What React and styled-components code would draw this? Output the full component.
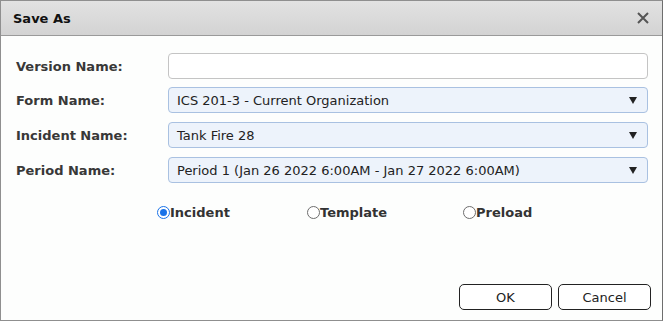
import React, { useState } from 'react'
import styled, { createGlobalStyle } from 'styled-components'

const GlobalStyle = createGlobalStyle`
  html, body {
    margin: 0;
    padding: 0;
    background: #ffffff;
  }
  body {
    font-family: 'DejaVu Sans', Verdana, sans-serif;
  }
`

const FIELDS = [
  { label: 'Version Name:', kind: 'input', value: '' },
  { label: 'Form Name:', kind: 'select', value: 'ICS 201-3 - Current Organization' },
  { label: 'Incident Name:', kind: 'select', value: 'Tank Fire 28' },
  { label: 'Period Name:', kind: 'select', value: 'Period 1 (Jan 26 2022 6:00AM - Jan 27 2022 6:00AM)' }
]

const TYPES = ['Incident', 'Template', 'Preload']

const Dialog = styled.div`
  width: 663px;
  height: 321px;
  box-sizing: border-box;
  border: 1px solid #8f8f8f;
  border-right-color: #6e6e6e;
  background: #fdfefd;
  display: flex;
  flex-direction: column;
`

const TitleBar = styled.div`
  height: 35px;
  box-sizing: border-box;
  display: flex;
  align-items: center;
  justify-content: space-between;
  padding: 0 12px 0 12px;
  background: linear-gradient(#e2e2e2, #d3d3d3);
  border-bottom: 1px solid #9a9a9a;
`

const Title = styled.div`
  font-size: 13px;
  font-weight: bold;
  color: #111;
`

const Close = styled.button`
  border: 0;
  background: none;
  padding: 0;
  width: 14px;
  height: 14px;
  display: flex;
  align-items: center;
  justify-content: center;
`

const Body = styled.div`
  flex: 1;
  padding: 17px 0 0 15px;
  display: flex;
  flex-direction: column;
`

const Row = styled.div`
  display: grid;
  grid-template-columns: 152px 1fr;
  align-items: center;
  height: 25px;
  margin: 0 14px ${p => (p.$first ? 9 : 10)}px 0;
`

const Label = styled.div`
  font-size: 13px;
  font-weight: bold;
  color: #383838;
`

const TextBox = styled.input`
  box-sizing: border-box;
  height: 26px;
  width: 100%;
  border: 1px solid #c4c4c4;
  border-radius: 4px;
  background: #fff;
  padding: 0 8px;
  font: 13px 'DejaVu Sans', Verdana, sans-serif;
`

const Select = styled.div`
  box-sizing: border-box;
  height: 26px;
  border: 1px solid #a9c1e1;
  border-radius: 4px;
  background: #edf3fb;
  display: flex;
  align-items: center;
  justify-content: space-between;
  padding: 0 10px 0 8px;
  font-size: 13px;
  color: #222;
`

const Caret = styled.span`
  width: 0;
  height: 0;
  border-left: 4px solid transparent;
  border-right: 4px solid transparent;
  border-top: 7px solid #222;
`

const Radios = styled.div`
  display: grid;
  grid-template-columns: 150px 156px auto;
  padding-left: 141px;
  margin-top: 13px;
`

const RadioLabel = styled.label`
  display: flex;
  align-items: center;
  font-size: 13px;
  font-weight: bold;
  color: #333;
`

const Dot = styled.span`
  box-sizing: border-box;
  width: 13px;
  height: 13px;
  border-radius: 50%;
  border: 1px solid ${p => (p.$on ? '#1a73e8' : '#6d6d6d')};
  background: #fff;
  display: flex;
  align-items: center;
  justify-content: center;
  &::after {
    content: '';
    width: 7px;
    height: 7px;
    border-radius: 50%;
    background: ${p => (p.$on ? '#1a73e8' : 'transparent')};
  }
`

const Footer = styled.div`
  margin-top: auto;
  display: flex;
  justify-content: flex-end;
  gap: 6px;
  padding: 0 11px 10px 0;
`

const Button = styled.button`
  box-sizing: border-box;
  width: 93px;
  height: 26px;
  border: 1px solid #222;
  border-radius: 5px;
  background: #fff;
  font: 13px 'DejaVu Sans', Verdana, sans-serif;
  color: #222;
`

export default function App () {
  const [type, setType] = useState('Incident')
  return (
    <>
      <GlobalStyle />
      <Dialog>
        <TitleBar>
          <Title>Save As</Title>
          <Close aria-label='close'>
            <svg width='12' height='12' viewBox='0 0 12 12'>
              <path d='M1 1 L11 11 M11 1 L1 11' stroke='#555' strokeWidth='2' />
            </svg>
          </Close>
        </TitleBar>
        <Body>
          {FIELDS.map((f, i) => (
            <Row key={f.label} $first={i === 0}>
              <Label>{f.label}</Label>
              {f.kind === 'input'
                ? <TextBox defaultValue={f.value} />
                : (
                  <Select>
                    <span>{f.value}</span>
                    <Caret />
                  </Select>
                  )}
            </Row>
          ))}
          <Radios>
            {TYPES.map(t => (
              <RadioLabel key={t} onClick={() => setType(t)}>
                <Dot $on={type === t} />
                {t}
              </RadioLabel>
            ))}
          </Radios>
          <Footer>
            <Button>OK</Button>
            <Button>Cancel</Button>
          </Footer>
        </Body>
      </Dialog>
    </>
  )
}
